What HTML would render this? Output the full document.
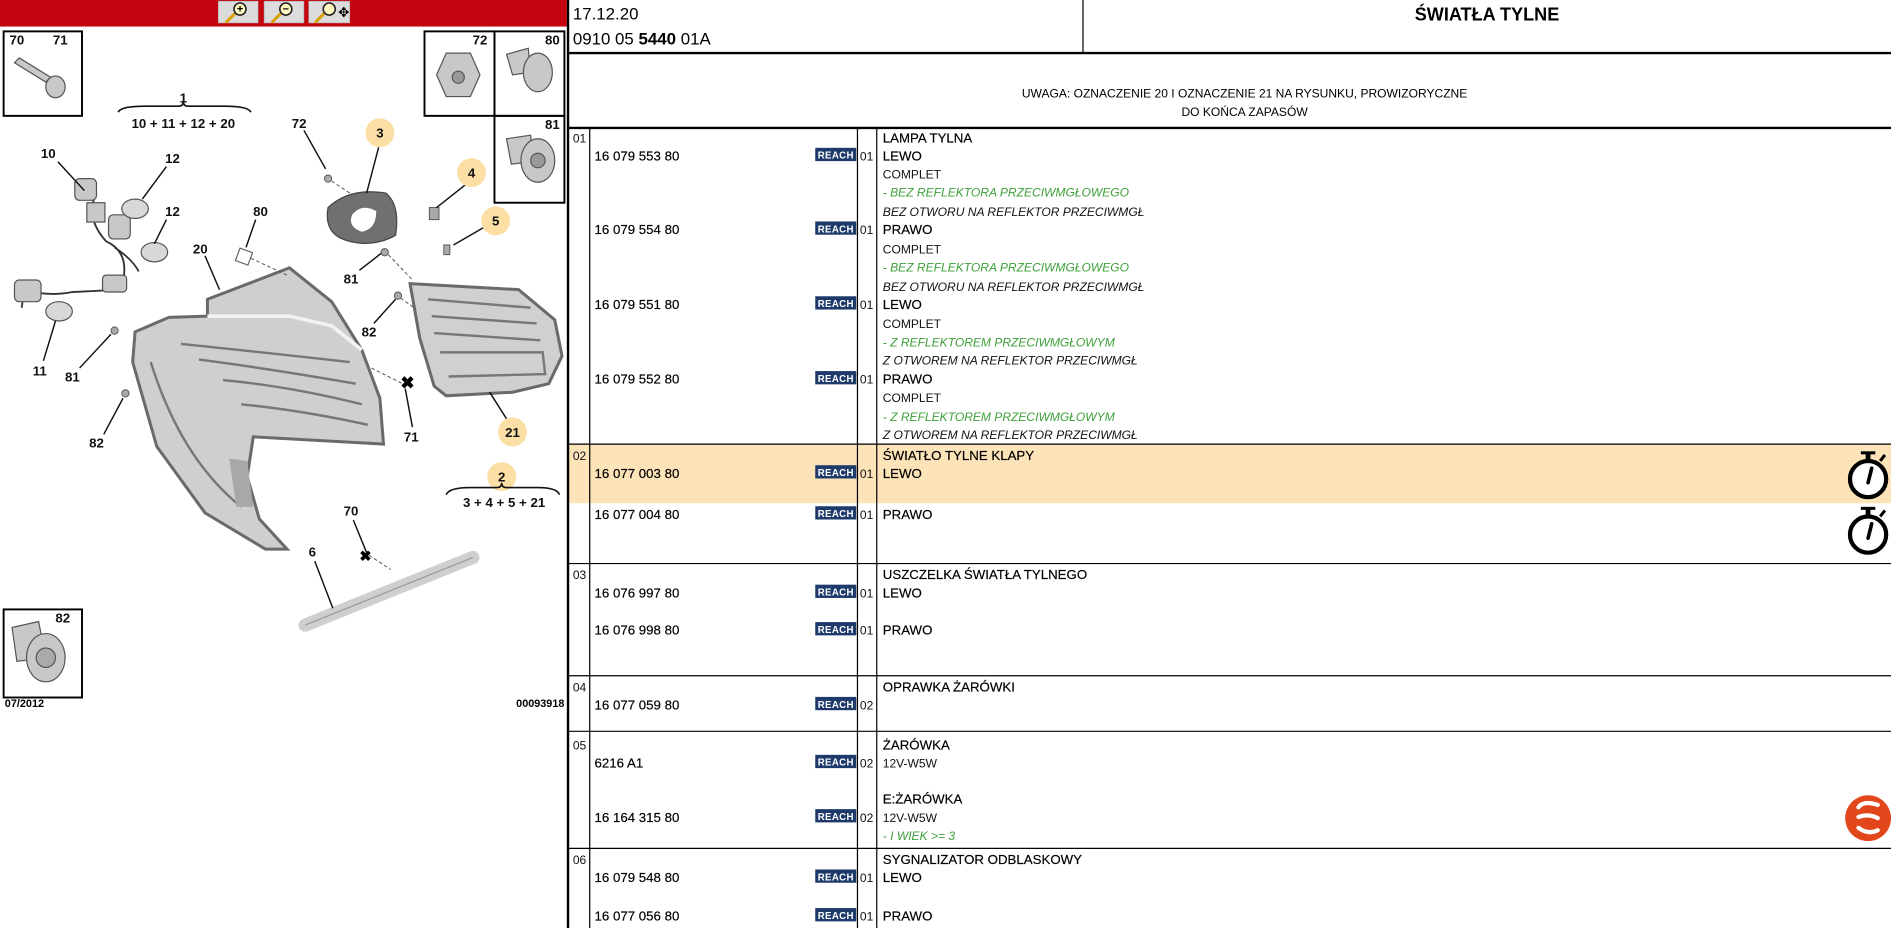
<!DOCTYPE html>
<html><head><meta charset="utf-8"><style>
html,body{margin:0;padding:0;background:#fff;overflow:hidden}
svg{display:block}
text{font-family:"Liberation Sans",Arial,sans-serif}
.p{font-size:11px;fill:#000;stroke:#000;stroke-width:.15}
.d{font-size:11px;fill:#000;stroke:#000;stroke-width:.15}
.n{font-size:10px;fill:#111}
.g{font-size:10px;fill:#3ea03a;font-style:italic}
.i{font-size:10px;fill:#111;font-style:italic}
.q{font-size:10px;fill:#111}
.lb{font-size:11px;font-weight:bold;fill:#111}
</style></head><body>
<svg width="1891" height="928" viewBox="0 0 1568 769" preserveAspectRatio="none" xmlns="http://www.w3.org/2000/svg">
<defs>
<g id="reach"><rect x="0" y="-5.5" width="34" height="11" fill="#1d3a6b"/><text x="17" y="3.5" text-anchor="middle" style="font-size:8px;font-weight:bold;fill:#fff;letter-spacing:.3px">REACH</text></g>
<g id="watch"><circle cx="0" cy="0" r="15" fill="#fff" stroke="#000" stroke-width="3.5"/><rect x="-2" y="-22" width="4" height="6" fill="#000"/><rect x="-6" y="-23" width="12" height="2.5" fill="#000"/><line x1="10" y1="-15" x2="14" y2="-20" stroke="#000" stroke-width="2.5"/><line x1="0" y1="3" x2="3" y2="-9" stroke="#000" stroke-width="3" stroke-linecap="round"/></g>
</defs>
<!-- left panel -->
<rect x="0" y="0" width="470" height="22" fill="#c4040e"/>
<g fill="#dcdcdc" stroke="#aaa" stroke-width=".5">
<rect x="181" y="1" width="33" height="18"/><rect x="219" y="1" width="33" height="18"/><rect x="256" y="1" width="34" height="18"/></g>
<g stroke="#d8a000" stroke-width="2.5" stroke-linecap="round"><line x1="194" y1="12" x2="188" y2="18"/><line x1="232" y1="12" x2="226" y2="18"/><line x1="268" y1="12" x2="262" y2="18"/></g>
<g fill="#fff8c0" stroke="#222" stroke-width="1.3"><circle cx="199" cy="7.5" r="5"/><circle cx="237" cy="7.5" r="5"/><circle cx="273" cy="7.5" r="5"/></g>
<text x="199" y="10.5" text-anchor="middle" style="font-size:9px;font-weight:bold">+</text>
<text x="237" y="10.5" text-anchor="middle" style="font-size:9px;font-weight:bold">−</text>
<text x="285" y="14" text-anchor="middle" style="font-size:11px">✥</text>

<g fill="none" stroke="#000" stroke-width="1.6">
<rect x="3" y="26" width="65" height="70"/>
<rect x="352" y="26" width="58" height="70"/><rect x="410" y="26" width="58" height="70"/><rect x="410" y="96" width="58" height="72"/>
<rect x="3" y="505" width="65" height="73"/>
</g>
<g fill="#c8c8c8" stroke="#555" stroke-width="1">
<path d="M12,52 L38,68 L42,64 L16,48 Z"/><ellipse cx="46" cy="72" rx="8" ry="9"/>
<path d="M362,62 L370,44 L390,44 L398,62 L390,80 L370,80 Z"/><circle cx="380" cy="64" r="5" fill="#999"/>
<path d="M420,45 L438,40 L440,60 L425,62 Z"/><ellipse cx="446" cy="60" rx="12" ry="16"/>
<path d="M420,115 L440,112 L442,134 L424,136 Z"/><ellipse cx="446" cy="133" rx="14" ry="18"/><circle cx="446" cy="133" r="6" fill="#999"/>
<path d="M10,520 L32,515 L38,545 L14,548 Z"/><ellipse cx="38" cy="545" rx="16" ry="20"/><circle cx="38" cy="545" r="8" fill="#aaa"/>
</g>
<g fill="none" stroke="#333" stroke-width="1.5">
<path d="M80,160 Q70,180 88,200 Q110,210 100,240 L60,242 Q40,246 20,240 L18,255"/>
<path d="M95,205 Q110,215 115,225"/>
</g>
<g fill="#c8c8c8" stroke="#555" stroke-width="1">
<rect x="62" y="148" width="18" height="18" rx="4"/><rect x="72" y="168" width="15" height="16"/><rect x="90" y="178" width="18" height="20" rx="4"/>
<rect x="85" y="228" width="20" height="14" rx="3"/><rect x="12" y="232" width="22" height="18" rx="4"/>
<ellipse cx="112" cy="173" rx="11" ry="8" fill="#d8d8d8"/><ellipse cx="128" cy="209" rx="11" ry="8" fill="#d8d8d8"/><ellipse cx="49" cy="258" rx="11" ry="8" fill="#d8d8d8"/>
</g>
<!-- lamp 20 -->
<path d="M172,262 L172,248 L240,222 L275,250 L300,290 L315,330 L318,368 L210,362 L205,395 L215,430 L238,455 L220,455 L170,425 L130,370 L110,300 L112,275 L140,263 Z" fill="#cfcfcf" stroke="#6a6a6a" stroke-width="2.5"/>
<path d="M172,262 L240,262 L275,270 L300,290" fill="none" stroke="#f2f2f2" stroke-width="3"/>
<g fill="none" stroke="#777" stroke-width="2">
<path d="M150,285 Q200,290 290,300"/><path d="M165,298 Q220,305 295,318"/><path d="M185,315 Q240,320 300,335"/><path d="M200,335 Q250,340 305,352"/><path d="M125,300 Q150,380 200,420"/>
</g>
<path d="M190,380 L205,382 L210,420 L196,420 Z" fill="#a8a8a8"/>
<!-- lamp 21 -->
<path d="M340,235 L430,240 L460,265 L466,295 L455,318 L425,325 L370,328 L360,320 L348,280 Z" fill="#d0d0d0" stroke="#6a6a6a" stroke-width="2.5"/>
<g fill="none" stroke="#777" stroke-width="2"><path d="M355,248 L440,255"/><path d="M358,262 L445,268"/><path d="M360,276 L448,282"/><path d="M365,292 L450,292 L452,310 L372,312"/></g>
<!-- seal 3 -->
<path d="M272,172 Q290,155 320,160 Q332,170 328,195 Q310,205 290,200 Q268,195 272,172 Z" fill="#707070" stroke="#444"/>
<path d="M292,178 Q300,168 312,175 Q312,190 300,192 Q288,188 292,178 Z" fill="#fff"/>
<!-- reflector 6 -->
<line x1="253" y1="518" x2="392" y2="462" stroke="#cfcfcf" stroke-width="11" stroke-linecap="round"/>
<line x1="253" y1="518" x2="392" y2="462" stroke="#999" stroke-width="1" />
<g fill="#aaa" stroke="#555" stroke-width=".8"><circle cx="272" cy="148" r="3"/><circle cx="319" cy="209" r="3"/><circle cx="330" cy="245" r="3"/><circle cx="95" cy="274" r="3"/><circle cx="104" cy="326" r="3"/><rect x="356" y="172" width="8" height="10"/><rect x="368" y="203" width="5" height="8"/></g>
<rect x="197" y="207" width="11" height="11" fill="#fff" stroke="#666" transform="rotate(20 202 212)"/>
<g stroke="#111" stroke-width="1.2" fill="none">
<line x1="48" y1="134" x2="70" y2="158"/><line x1="138" y1="138" x2="118" y2="165"/><line x1="138" y1="182" x2="128" y2="202"/>
<line x1="212" y1="182" x2="204" y2="205"/><line x1="170" y1="212" x2="182" y2="240"/><line x1="252" y1="108" x2="270" y2="140"/>
<line x1="314" y1="122" x2="304" y2="160"/><line x1="386" y1="153" x2="362" y2="172"/><line x1="402" y1="188" x2="376" y2="203"/>
<line x1="298" y1="224" x2="316" y2="210"/><line x1="310" y1="268" x2="328" y2="248"/><line x1="36" y1="299" x2="46" y2="266"/>
<line x1="66" y1="305" x2="92" y2="277"/><line x1="86" y1="360" x2="102" y2="330"/><line x1="342" y1="354" x2="336" y2="322"/>
<line x1="420" y1="347" x2="406" y2="325"/><line x1="293" y1="431" x2="304" y2="458"/><line x1="261" y1="465" x2="276" y2="504"/>
</g>
<g stroke="#555" stroke-width=".8" stroke-dasharray="3,2" fill="none"><line x1="208" y1="214" x2="238" y2="228"/><line x1="275" y1="150" x2="290" y2="160"/><line x1="322" y1="211" x2="342" y2="232"/><line x1="332" y1="247" x2="345" y2="256"/><line x1="308" y1="305" x2="334" y2="318"/><line x1="306" y1="460" x2="324" y2="472"/></g>
<text x="332" y="322" style="font-size:14px;font-weight:bold">✖</text>
<text x="298" y="465" style="font-size:12px;font-weight:bold">✖</text>
<g fill="#fbdfa5"><circle cx="315" cy="110" r="12"/><circle cx="391" cy="143" r="12"/><circle cx="411" cy="183" r="12"/><circle cx="425" cy="358" r="12"/><circle cx="416" cy="395" r="12"/></g>
<g fill="none" stroke="#111" stroke-width="1.3"><path d="M98,93 Q100,88 120,88 L148,88 Q152,88 152,84 Q152,88 156,88 L186,88 Q206,88 208,93"/><path d="M370,410 Q372,404 390,404 L412,404 Q416,404 416,400 Q416,404 420,404 L446,404 Q462,404 464,410"/></g>
<g class="lb" text-anchor="middle">
<text x="14" y="37">70</text><text x="50" y="37">71</text><text x="398" y="37">72</text><text x="458" y="37">80</text><text x="458" y="107">81</text>
<text x="152" y="85">1</text><text x="152" y="106">10 + 11 + 12 + 20</text><text x="248" y="106">72</text><text x="315" y="114">3</text>
<text x="40" y="131">10</text><text x="143" y="135">12</text><text x="143" y="179">12</text><text x="216" y="179">80</text><text x="166" y="210">20</text>
<text x="391" y="147">4</text><text x="411" y="187">5</text><text x="291" y="235">81</text><text x="306" y="279">82</text><text x="33" y="311">11</text><text x="60" y="316">81</text><text x="80" y="371">82</text><text x="341" y="366">71</text><text x="425" y="362">21</text>
<text x="416" y="399">2</text><text x="418" y="420">3 + 4 + 5 + 21</text><text x="291" y="427">70</text><text x="259" y="461">6</text><text x="52" y="516">82</text>
</g>
<text x="4" y="586" style="font-size:9px;font-weight:bold">07/2012</text>
<text x="468" y="586" text-anchor="end" style="font-size:9px;font-weight:bold">00093918</text>

<!-- right panel -->
<rect x="471" y="368" width="1097" height="49" fill="#fde3b8"/>
<g stroke="#000">
<line x1="471" y1="0" x2="471" y2="769" stroke-width="2"/>
<line x1="471" y1="44" x2="1568" y2="44" stroke-width="2"/>
<line x1="471" y1="106" x2="1568" y2="106" stroke-width="2"/>
<line x1="898" y1="0" x2="898" y2="44" stroke-width="1"/>
<g stroke-width="1"><line x1="489" y1="106" x2="489" y2="769"/><line x1="711" y1="106" x2="711" y2="769"/><line x1="727" y1="106" x2="727" y2="769"/>
<line x1="471" y1="368" x2="1568" y2="368"/><line x1="471" y1="467" x2="1568" y2="467"/><line x1="471" y1="560" x2="1568" y2="560"/><line x1="471" y1="606" x2="1568" y2="606"/><line x1="471" y1="703" x2="1568" y2="703"/></g>
</g>
<text x="475" y="16" style="font-size:14px">17.12.20</text>
<text x="475" y="37" style="font-size:14px">0910 05 <tspan font-weight="bold">5440</tspan> 01A</text>
<text x="1233" y="17" text-anchor="middle" style="font-size:15px;font-weight:bold">ŚWIATŁA TYLNE</text>
<text x="1032" y="81" text-anchor="middle" style="font-size:10px">UWAGA: OZNACZENIE 20 I OZNACZENIE 21 NA RYSUNKU, PROWIZORYCZNE</text>
<text x="1032" y="96" text-anchor="middle" style="font-size:10px">DO KOŃCA ZAPASÓW</text>

<g class="n"><text x="475" y="118">01</text><text x="475" y="381">02</text><text x="475" y="480">03</text><text x="475" y="573">04</text><text x="475" y="621">05</text><text x="475" y="716">06</text></g>

<g class="p">
<text x="493" y="133">16 079 553 80</text><text x="493" y="194">16 079 554 80</text><text x="493" y="256">16 079 551 80</text><text x="493" y="318">16 079 552 80</text>
<text x="493" y="396">16 077 003 80</text><text x="493" y="430">16 077 004 80</text><text x="493" y="495">16 076 997 80</text><text x="493" y="526">16 076 998 80</text>
<text x="493" y="588">16 077 059 80</text><text x="493" y="636">6216 A1</text><text x="493" y="681">16 164 315 80</text><text x="493" y="731">16 079 548 80</text><text x="493" y="763">16 077 056 80</text>
</g>
<use href="#reach" x="676" y="128"/><use href="#reach" x="676" y="189"/><use href="#reach" x="676" y="251"/><use href="#reach" x="676" y="313"/>
<use href="#reach" x="676" y="391"/><use href="#reach" x="676" y="425"/><use href="#reach" x="676" y="490"/><use href="#reach" x="676" y="521"/>
<use href="#reach" x="676" y="583"/><use href="#reach" x="676" y="631"/><use href="#reach" x="676" y="676"/><use href="#reach" x="676" y="726"/><use href="#reach" x="676" y="758"/>
<g class="q">
<text x="713" y="133">01</text><text x="713" y="194">01</text><text x="713" y="256">01</text><text x="713" y="318">01</text><text x="713" y="396">01</text><text x="713" y="430">01</text><text x="713" y="495">01</text><text x="713" y="526">01</text>
<text x="713" y="588">02</text><text x="713" y="636">02</text><text x="713" y="681">02</text><text x="713" y="731">01</text><text x="713" y="763">01</text>
</g>
<g class="d">
<text x="732" y="118">LAMPA TYLNA</text><text x="732" y="133">LEWO</text><text x="732" y="194">PRAWO</text><text x="732" y="256">LEWO</text><text x="732" y="318">PRAWO</text>
<text x="732" y="381">ŚWIATŁO TYLNE KLAPY</text><text x="732" y="396">LEWO</text><text x="732" y="430">PRAWO</text>
<text x="732" y="480">USZCZELKA ŚWIATŁA TYLNEGO</text><text x="732" y="495">LEWO</text><text x="732" y="526">PRAWO</text>
<text x="732" y="573">OPRAWKA ŻARÓWKI</text><text x="732" y="621">ŻARÓWKA</text><text x="732" y="666">E:ŻARÓWKA</text>
<text x="732" y="716">SYGNALIZATOR ODBLASKOWY</text><text x="732" y="731">LEWO</text><text x="732" y="763">PRAWO</text>
</g>
<g class="q">
<text x="732" y="148">COMPLET</text><text x="732" y="210">COMPLET</text><text x="732" y="272">COMPLET</text><text x="732" y="333">COMPLET</text>
<text x="732" y="636">12V-W5W</text><text x="732" y="681">12V-W5W</text>
</g>
<g class="g">
<text x="732" y="163">- BEZ REFLEKTORA PRZECIWMGŁOWEGO</text><text x="732" y="225">- BEZ REFLEKTORA PRZECIWMGŁOWEGO</text>
<text x="732" y="287">- Z REFLEKTOREM PRZECIWMGŁOWYM</text><text x="732" y="349">- Z REFLEKTOREM PRZECIWMGŁOWYM</text>
<text x="732" y="696">- I WIEK &gt;= 3</text>
</g>
<g class="i">
<text x="732" y="179">BEZ OTWORU NA REFLEKTOR PRZECIWMGŁ</text><text x="732" y="241">BEZ OTWORU NA REFLEKTOR PRZECIWMGŁ</text>
<text x="732" y="302">Z OTWOREM NA REFLEKTOR PRZECIWMGŁ</text><text x="732" y="364">Z OTWOREM NA REFLEKTOR PRZECIWMGŁ</text>
</g>
<use href="#watch" x="1549" y="397"/>
<use href="#watch" x="1549" y="443"/>
<circle cx="1549" cy="678" r="19" fill="#e2471b"/>
<g fill="none" stroke="#fff" stroke-width="3.5" stroke-linecap="round">
<path d="M1557,667 Q1545,663 1541,669"/><path d="M1541,677 Q1549,674 1557,678"/><path d="M1541,686 Q1549,692 1557,688"/>
</g>
</svg>
</body></html>
